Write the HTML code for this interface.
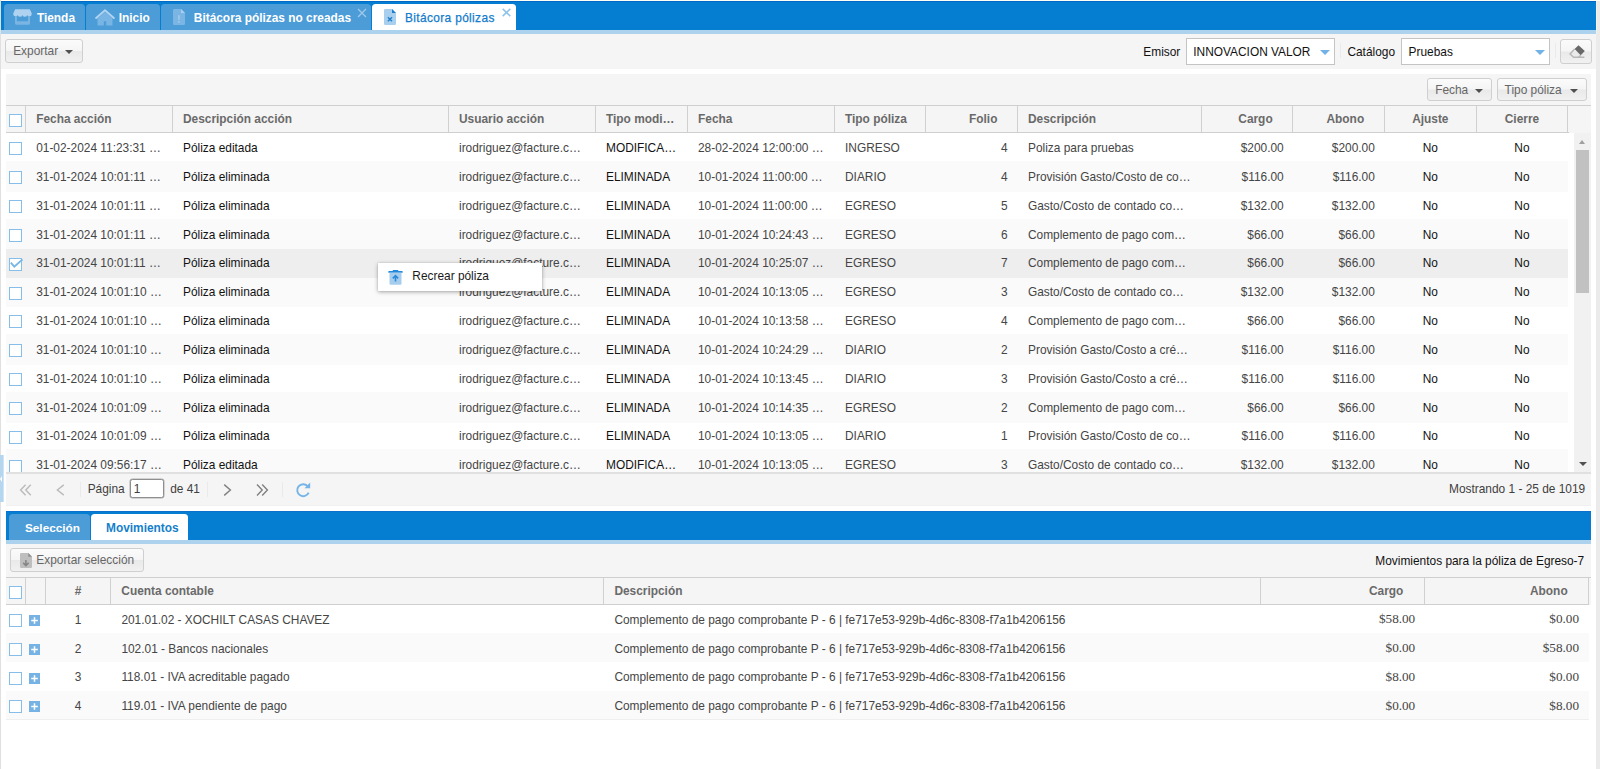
<!DOCTYPE html>
<html lang="es"><head><meta charset="utf-8"><title>Bitácora pólizas</title>
<style>
*{box-sizing:border-box;margin:0;padding:0}
html,body{width:1600px;height:769px;overflow:hidden;background:#fff}
body{font-family:"Liberation Sans",sans-serif;font-size:11.9px;color:#404040;position:relative}
.a{position:absolute}
.t{position:absolute;white-space:nowrap;line-height:14px}
#leftline{left:0;top:0;width:1px;height:769px;background:#e0e0e0}
#topline{left:0;top:0;width:1600px;height:1px;background:#fffef2}
#rstrip{left:1596px;top:1px;width:4px;height:768px;background:#ebebeb}
.bar{background:#057dd0}
.strip{background:#add2ed}
.tbg{background:#f5f5f5}
.tab{position:absolute;top:4px;height:26px;background:#4b9cd7;border-radius:3.5px 3.5px 0 0;color:#fff;font-weight:bold}
.tab.act{background:#fff;color:#157fcc;font-weight:normal}
.tab .t{top:7.2px}
.btn{position:absolute;border:1px solid #cfcfcf;border-radius:3px;background:linear-gradient(#fbfbfb 0%,#f5f5f5 48%,#e9e9e9 52%,#f1f1f1 100%);color:#666}
.arr{position:absolute;width:0;height:0;border-left:4px solid transparent;border-right:4px solid transparent;border-top:4.4px solid #505050}
.combo{position:absolute;top:38px;height:26.5px;background:#fff;border:1px solid #c4c4c4;color:#111}
.carr{position:absolute;width:0;height:0;border-left:5.1px solid transparent;border-right:5.1px solid transparent;border-top:5px solid #72b2e6}
.sep{position:absolute;width:1px;background:#eaeaea}
.hdr{position:absolute;background:#f5f5f5;border-top:1px solid #cfcfcf;color:#6a6a6a;font-weight:bold}
.hs{position:absolute;top:0;width:1px;background:#d0d0d0}
.cb{position:absolute;left:3px;top:9.4px;width:13px;height:13px;border:1px solid #86bde9;background:#fff}
.cb.chk svg{position:absolute;left:-1px;top:-1px;overflow:visible}
.gbody{position:absolute;left:6px;top:133px;width:1568px;height:339.5px;overflow:hidden;background:#fff}
.gbody2{position:absolute;left:6px;top:604.3px;width:1585px;height:120px;overflow:hidden}
.row{position:absolute;left:0;width:1561.6px}
.band{position:absolute;left:0;width:1561.6px}
.gbody2 .band{width:1583px}
.band.alt{background:#fafafa}
.band.sel{background:#eeeeee}
.gbody2 .row{width:1583px}
.c{position:absolute;top:8px;line-height:14px;white-space:nowrap}
.g{color:#454545}
.k{color:#121212}
.r{text-align:right}
.ctr{text-align:center}
.plus{position:absolute;left:22.9px;top:10.8px;width:11px;height:11px}
.plus svg{display:block}
.gbody2 .cb{top:9.8px}
.gbody2 .c{top:8.5px}
.gbody2 .c.sf{top:8.1px}
.hb{position:absolute;left:0;height:1px;background:#cfcfcf}
.sf{font-family:"Liberation Serif",serif;font-size:13.2px}

</style></head><body>
<div class="a" id="topline"></div>
<div class="a" id="leftline"></div>
<div class="a" id="rstrip"></div>
<div class="a" style="left:1596px;top:1px;width:1px;height:33px;background:#f6f2e6"></div>
<div class="a bar" style="left:1px;top:1px;width:1595px;height:29px"></div>
<div class="a" style="left:1px;top:1px;width:1595px;height:1px;background:#0069c9"></div>
<div class="a strip" style="left:1px;top:30px;width:1595px;height:4px"></div>
<div class="a tbg" style="left:1px;top:34px;width:1595px;height:35px"></div>

<div class="tab" style="left:4px;width:80.8px">
<svg class="a" style="left:9px;top:5px" width="19" height="16" viewBox="0 0 19 16"><path d="M2.2 0.3h14.6l1.9 3.9v1.1a2.3 2.3 0 0 1-4.5.6 2.4 2.4 0 0 1-4.7 0 2.4 2.4 0 0 1-4.7 0 2.3 2.3 0 0 1-4.5-.6V4.2z" fill="#aed2f0"/><path d="M2 7.6v6.6a1.6 1.6 0 0 0 1.6 1.6h11.8a1.6 1.6 0 0 0 1.6-1.6V7.6h-1.9v4.6H3.9V7.6z" fill="#7ab5e4"/></svg>
<span class="t" style="left:32.9px">Tienda</span></div>
<div class="tab" style="left:86px;width:73.6px">
<svg class="a" style="left:8.9px;top:4.7px" width="20" height="17" viewBox="0 0 20 17"><path d="M2.5 9.6L10 3L17.5 9.6V16.5H11.2V12.3H8.8V16.5H2.5Z" fill="#78b4e4"/><path d="M1.2 9L10 1.3L18.8 9" fill="none" stroke="#b0d3f0" stroke-width="2" stroke-linecap="round" stroke-linejoin="round"/></svg>
<span class="t" style="left:32.7px">Inicio</span></div>
<div class="tab" style="left:161px;width:209.7px">
<svg class="a" style="left:12px;top:5px" width="12" height="16" viewBox="0 0 12 16"><path d="M1.2 0H8L12 4V14.8A1.2 1.2 0 0 1 10.8 16H1.2A1.2 1.2 0 0 1 0 14.8V1.2A1.2 1.2 0 0 1 1.2 0Z" fill="#7ab5e4"/><path d="M8 0L12 4H8Z" fill="#a9d0f0"/><rect x="5.2" y="6.2" width="1.5" height="4.6" fill="#a3ccee"/><rect x="5.2" y="12" width="1.5" height="1.6" fill="#a3ccee"/></svg>
<span class="t" style="left:32.8px">Bitácora pólizas no creadas</span>
<svg class="a" style="left:196px;top:4px" width="10" height="10" viewBox="0 0 10 10"><path d="M1 1L9 9M9 1L1 9" stroke="#9fc9ec" stroke-width="1.3" fill="none"/></svg>
</div>
<div class="tab act" style="left:372px;width:143.5px">
<svg class="a" style="left:12px;top:5px" width="12" height="16" viewBox="0 0 12 16"><path d="M1.2 0H8L12 4V14.8A1.2 1.2 0 0 1 10.8 16H1.2A1.2 1.2 0 0 1 0 14.8V1.2A1.2 1.2 0 0 1 1.2 0Z" fill="#a9cfee"/><path d="M8 0L12 4H8Z" fill="#1c7fce"/><path d="M3.9 8.2L8 12.2M8 8.2L3.9 12.2" stroke="#1f7fcb" stroke-width="1.4" fill="none"/></svg>
<span class="t" style="left:33px;top:7.4px;font-size:11.9px;letter-spacing:0.36px;color:#137ccb;-webkit-text-stroke:0.25px #137ccb">Bitácora pólizas</span>
<svg class="a" style="left:129.6px;top:4.2px" width="9" height="9" viewBox="0 0 9 9"><path d="M0.7 0.9L8.3 8.1M8.3 0.9L0.7 8.1" stroke="#8ec3ea" stroke-width="1.5" fill="none"/></svg>
</div>

<div class="btn" style="left:5px;top:39px;width:77.5px;height:23.5px"><span class="t" style="left:7.2px;top:3.6px">Exportar</span><span class="arr" style="left:59.4px;top:10px"></span></div>

<span class="t k" style="left:1143.3px;top:44.6px;color:#111">Emisor</span>
<div class="combo" style="left:1186px;width:149px"><span class="t" style="left:6.3px;top:5.6px">INNOVACION VALOR</span><span class="carr" style="left:132.5px;top:11.4px"></span></div>
<div class="sep" style="left:1340px;top:43px;height:15px"></div>
<span class="t k" style="left:1347.4px;top:44.6px;color:#111">Catálogo</span>
<div class="combo" style="left:1401px;width:149px"><span class="t" style="left:6.6px;top:5.6px">Pruebas</span><span class="carr" style="left:132.7px;top:11.4px"></span></div>
<div class="sep" style="left:1555px;top:43px;height:15px"></div>
<div class="btn" style="left:1560.3px;top:39px;width:31.5px;height:24.7px">
<svg class="a" style="left:-0.8px;top:-0.2px" width="32" height="24" viewBox="0 0 32 24"><path d="M17.5 5.2L23.8 11.1L19.7 15.2L13.6 9Z" fill="#686868"/><path d="M13.6 9L9.1 14L12.6 17.3H23.4M19.7 15.2L17.4 17.3" fill="none" stroke="#b8b8b8" stroke-width="1.5"/></svg>
</div>

<!-- inner grid panel -->
<div class="a tbg" style="left:6px;top:74px;width:1585px;height:31px"></div>
<div class="btn" style="left:1427.4px;top:78.4px;width:65px;height:22.5px"><span class="t" style="left:6.8px;top:3.2px">Fecha</span><span class="arr" style="left:46.9px;top:9.8px"></span></div>
<div class="btn" style="left:1496.6px;top:78.4px;width:90.2px;height:22.5px"><span class="t" style="left:7px;top:3.2px">Tipo póliza</span><span class="arr" style="left:72.3px;top:9.8px"></span></div>

<div class="hdr" style="left:6px;top:105px;width:1585px;height:28px">
<span class="cb" style="left:3px;top:8.2px;height:13px"></span>
<div class="hs" style="left:19.2px;height:26px"></div>
<div class="hs" style="left:166px;height:26px"></div>
<div class="hs" style="left:442.2px;height:26px"></div>
<div class="hs" style="left:589.2px;height:26px"></div>
<div class="hs" style="left:681.2px;height:26px"></div>
<div class="hs" style="left:828.2px;height:26px"></div>
<div class="hs" style="left:919.2px;height:26px"></div>
<div class="hs" style="left:1011.2px;height:26px"></div>
<div class="hs" style="left:1195.4px;height:26px"></div>
<div class="hs" style="left:1286.4px;height:26px"></div>
<div class="hs" style="left:1378.2px;height:26px"></div>
<div class="hs" style="left:1470.2px;height:26px"></div>
<div class="hs" style="left:1561.2px;height:26px"></div>
<div class="hb" style="top:26px;width:1562.5px"></div>
<span class="t" style="left:30.2px;top:6px">Fecha acción</span>
<span class="t" style="left:177px;top:6px">Descripción acción</span>
<span class="t" style="left:453px;top:6px">Usuario acción</span>
<span class="t" style="left:600px;top:6px">Tipo modi…</span>
<span class="t" style="left:692px;top:6px">Fecha</span>
<span class="t" style="left:839px;top:6px">Tipo póliza</span>
<span class="t" style="left:963px;top:6px">Folio</span>
<span class="t" style="left:1022px;top:6px">Descripción</span>
<span class="t" style="left:1232.3px;top:6px">Cargo</span>
<span class="t" style="left:1320.5px;top:6px">Abono</span>
<span class="t ctr" style="left:1378.3px;width:92px;top:6px">Ajuste</span>
<span class="t ctr" style="left:1470.3px;width:91.3px;top:6px">Cierre</span>
</div>
<div class="gbody" id="g1">
<div class="band alt" style="top:28.04px;height:30.84px"></div><div class="band alt" style="top:85.72px;height:30.84px"></div><div class="band alt" style="top:143.40px;height:30.84px"></div><div class="band alt" style="top:201.08px;height:30.84px"></div><div class="band alt" style="top:258.76px;height:30.84px"></div><div class="band alt" style="top:316.44px;height:30.84px"></div><div class="band sel" style="top:116.06px;height:28.74px"></div>
<div class="row" style="top:0.00px;height:28.84px"><span class="cb"></span><span class="c g" style="left:30.2px">01-02-2024 11:23:31 …</span><span class="c k" style="left:177px">Póliza editada</span><span class="c g" style="left:453px">irodriguez@facture.c…</span><span class="c k" style="left:600px">MODIFICA…</span><span class="c g" style="left:692px">28-02-2024 12:00:00 …</span><span class="c g" style="left:839px">INGRESO</span><span class="c g r" style="right:560.0px">4</span><span class="c g" style="left:1022px">Poliza para pruebas</span><span class="c g r" style="right:283.9px">$200.00</span><span class="c g r" style="right:192.8px">$200.00</span><span class="c k ctr" style="left:1378.3px;width:92px">No</span><span class="c k ctr" style="left:1470.3px;width:91.3px">No</span></div>
<div class="row" style="top:28.84px;height:28.84px"><span class="cb"></span><span class="c g" style="left:30.2px">31-01-2024 10:01:11 …</span><span class="c k" style="left:177px">Póliza eliminada</span><span class="c g" style="left:453px">irodriguez@facture.c…</span><span class="c k" style="left:600px">ELIMINADA</span><span class="c g" style="left:692px">10-01-2024 11:00:00 …</span><span class="c g" style="left:839px">DIARIO</span><span class="c g r" style="right:560.0px">4</span><span class="c g" style="left:1022px">Provisión Gasto/Costo de co…</span><span class="c g r" style="right:283.9px">$116.00</span><span class="c g r" style="right:192.8px">$116.00</span><span class="c k ctr" style="left:1378.3px;width:92px">No</span><span class="c k ctr" style="left:1470.3px;width:91.3px">No</span></div>
<div class="row" style="top:57.68px;height:28.84px"><span class="cb"></span><span class="c g" style="left:30.2px">31-01-2024 10:01:11 …</span><span class="c k" style="left:177px">Póliza eliminada</span><span class="c g" style="left:453px">irodriguez@facture.c…</span><span class="c k" style="left:600px">ELIMINADA</span><span class="c g" style="left:692px">10-01-2024 11:00:00 …</span><span class="c g" style="left:839px">EGRESO</span><span class="c g r" style="right:560.0px">5</span><span class="c g" style="left:1022px">Gasto/Costo de contado co…</span><span class="c g r" style="right:283.9px">$132.00</span><span class="c g r" style="right:192.8px">$132.00</span><span class="c k ctr" style="left:1378.3px;width:92px">No</span><span class="c k ctr" style="left:1470.3px;width:91.3px">No</span></div>
<div class="row" style="top:86.52px;height:28.84px"><span class="cb"></span><span class="c g" style="left:30.2px">31-01-2024 10:01:11 …</span><span class="c k" style="left:177px">Póliza eliminada</span><span class="c g" style="left:453px">irodriguez@facture.c…</span><span class="c k" style="left:600px">ELIMINADA</span><span class="c g" style="left:692px">10-01-2024 10:24:43 …</span><span class="c g" style="left:839px">EGRESO</span><span class="c g r" style="right:560.0px">6</span><span class="c g" style="left:1022px">Complemento de pago com…</span><span class="c g r" style="right:283.9px">$66.00</span><span class="c g r" style="right:192.8px">$66.00</span><span class="c k ctr" style="left:1378.3px;width:92px">No</span><span class="c k ctr" style="left:1470.3px;width:91.3px">No</span></div>
<div class="row" style="top:115.36px;height:28.84px"><span class="cb chk"><svg viewBox="0 0 13 13" width="13" height="13"><path d="M1.8 4.7 L5.3 8.6 L13.5 1.4" fill="none" stroke="#78b7e6" stroke-width="1.9"/></svg></span><span class="c g" style="left:30.2px">31-01-2024 10:01:11 …</span><span class="c k" style="left:177px">Póliza eliminada</span><span class="c g" style="left:453px">irodriguez@facture.c…</span><span class="c k" style="left:600px">ELIMINADA</span><span class="c g" style="left:692px">10-01-2024 10:25:07 …</span><span class="c g" style="left:839px">EGRESO</span><span class="c g r" style="right:560.0px">7</span><span class="c g" style="left:1022px">Complemento de pago com…</span><span class="c g r" style="right:283.9px">$66.00</span><span class="c g r" style="right:192.8px">$66.00</span><span class="c k ctr" style="left:1378.3px;width:92px">No</span><span class="c k ctr" style="left:1470.3px;width:91.3px">No</span></div>
<div class="row" style="top:144.20px;height:28.84px"><span class="cb"></span><span class="c g" style="left:30.2px">31-01-2024 10:01:10 …</span><span class="c k" style="left:177px">Póliza eliminada</span><span class="c g" style="left:453px">irodriguez@facture.c…</span><span class="c k" style="left:600px">ELIMINADA</span><span class="c g" style="left:692px">10-01-2024 10:13:05 …</span><span class="c g" style="left:839px">EGRESO</span><span class="c g r" style="right:560.0px">3</span><span class="c g" style="left:1022px">Gasto/Costo de contado co…</span><span class="c g r" style="right:283.9px">$132.00</span><span class="c g r" style="right:192.8px">$132.00</span><span class="c k ctr" style="left:1378.3px;width:92px">No</span><span class="c k ctr" style="left:1470.3px;width:91.3px">No</span></div>
<div class="row" style="top:173.04px;height:28.84px"><span class="cb"></span><span class="c g" style="left:30.2px">31-01-2024 10:01:10 …</span><span class="c k" style="left:177px">Póliza eliminada</span><span class="c g" style="left:453px">irodriguez@facture.c…</span><span class="c k" style="left:600px">ELIMINADA</span><span class="c g" style="left:692px">10-01-2024 10:13:58 …</span><span class="c g" style="left:839px">EGRESO</span><span class="c g r" style="right:560.0px">4</span><span class="c g" style="left:1022px">Complemento de pago com…</span><span class="c g r" style="right:283.9px">$66.00</span><span class="c g r" style="right:192.8px">$66.00</span><span class="c k ctr" style="left:1378.3px;width:92px">No</span><span class="c k ctr" style="left:1470.3px;width:91.3px">No</span></div>
<div class="row" style="top:201.88px;height:28.84px"><span class="cb"></span><span class="c g" style="left:30.2px">31-01-2024 10:01:10 …</span><span class="c k" style="left:177px">Póliza eliminada</span><span class="c g" style="left:453px">irodriguez@facture.c…</span><span class="c k" style="left:600px">ELIMINADA</span><span class="c g" style="left:692px">10-01-2024 10:24:29 …</span><span class="c g" style="left:839px">DIARIO</span><span class="c g r" style="right:560.0px">2</span><span class="c g" style="left:1022px">Provisión Gasto/Costo a cré…</span><span class="c g r" style="right:283.9px">$116.00</span><span class="c g r" style="right:192.8px">$116.00</span><span class="c k ctr" style="left:1378.3px;width:92px">No</span><span class="c k ctr" style="left:1470.3px;width:91.3px">No</span></div>
<div class="row" style="top:230.72px;height:28.84px"><span class="cb"></span><span class="c g" style="left:30.2px">31-01-2024 10:01:10 …</span><span class="c k" style="left:177px">Póliza eliminada</span><span class="c g" style="left:453px">irodriguez@facture.c…</span><span class="c k" style="left:600px">ELIMINADA</span><span class="c g" style="left:692px">10-01-2024 10:13:45 …</span><span class="c g" style="left:839px">DIARIO</span><span class="c g r" style="right:560.0px">3</span><span class="c g" style="left:1022px">Provisión Gasto/Costo a cré…</span><span class="c g r" style="right:283.9px">$116.00</span><span class="c g r" style="right:192.8px">$116.00</span><span class="c k ctr" style="left:1378.3px;width:92px">No</span><span class="c k ctr" style="left:1470.3px;width:91.3px">No</span></div>
<div class="row" style="top:259.56px;height:28.84px"><span class="cb"></span><span class="c g" style="left:30.2px">31-01-2024 10:01:09 …</span><span class="c k" style="left:177px">Póliza eliminada</span><span class="c g" style="left:453px">irodriguez@facture.c…</span><span class="c k" style="left:600px">ELIMINADA</span><span class="c g" style="left:692px">10-01-2024 10:14:35 …</span><span class="c g" style="left:839px">EGRESO</span><span class="c g r" style="right:560.0px">2</span><span class="c g" style="left:1022px">Complemento de pago com…</span><span class="c g r" style="right:283.9px">$66.00</span><span class="c g r" style="right:192.8px">$66.00</span><span class="c k ctr" style="left:1378.3px;width:92px">No</span><span class="c k ctr" style="left:1470.3px;width:91.3px">No</span></div>
<div class="row" style="top:288.40px;height:28.84px"><span class="cb"></span><span class="c g" style="left:30.2px">31-01-2024 10:01:09 …</span><span class="c k" style="left:177px">Póliza eliminada</span><span class="c g" style="left:453px">irodriguez@facture.c…</span><span class="c k" style="left:600px">ELIMINADA</span><span class="c g" style="left:692px">10-01-2024 10:13:05 …</span><span class="c g" style="left:839px">DIARIO</span><span class="c g r" style="right:560.0px">1</span><span class="c g" style="left:1022px">Provisión Gasto/Costo de co…</span><span class="c g r" style="right:283.9px">$116.00</span><span class="c g r" style="right:192.8px">$116.00</span><span class="c k ctr" style="left:1378.3px;width:92px">No</span><span class="c k ctr" style="left:1470.3px;width:91.3px">No</span></div>
<div class="row" style="top:317.24px;height:28.84px"><span class="cb"></span><span class="c g" style="left:30.2px">31-01-2024 09:56:17 …</span><span class="c k" style="left:177px">Póliza editada</span><span class="c g" style="left:453px">irodriguez@facture.c…</span><span class="c k" style="left:600px">MODIFICA…</span><span class="c g" style="left:692px">10-01-2024 10:13:05 …</span><span class="c g" style="left:839px">EGRESO</span><span class="c g r" style="right:560.0px">3</span><span class="c g" style="left:1022px">Gasto/Costo de contado co…</span><span class="c g r" style="right:283.9px">$132.00</span><span class="c g r" style="right:192.8px">$132.00</span><span class="c k ctr" style="left:1378.3px;width:92px">No</span><span class="c k ctr" style="left:1470.3px;width:91.3px">No</span></div>
</div>
<!-- scrollbar -->
<div class="a" style="left:1574px;top:133px;width:17px;height:339.5px;background:#f1f1f1">
<span class="a" style="left:5px;top:7px;width:0;height:0;border-left:3.5px solid transparent;border-right:3.5px solid transparent;border-bottom:4px solid #a0a0a0"></span>
<div class="a" style="left:2px;top:17.1px;width:13px;height:142.9px;background:#c1c1c1"></div>
<span class="a" style="left:4.5px;top:328.5px;width:0;height:0;border-left:4px solid transparent;border-right:4px solid transparent;border-top:4.5px solid #505050"></span>
</div>
<!-- paging toolbar -->
<div class="a" style="left:6px;top:472px;width:1585px;height:33.6px;background:#f5f5f5;border-top:2px solid #e0e0e0;border-bottom:1px solid #f0f0f0"></div>
<svg class="a" style="left:19px;top:483px" width="14" height="14" viewBox="0 0 14 14"><path d="M6.6 1.8L1.6 7L6.6 12.2M11.8 1.8L6.8 7L11.8 12.2" fill="none" stroke="#bcbcbc" stroke-width="1.5"/></svg>
<svg class="a" style="left:54px;top:483px" width="14" height="14" viewBox="0 0 14 14"><path d="M9.8 1.8L3.4 7L9.8 12.2" fill="none" stroke="#bcbcbc" stroke-width="1.5"/></svg>
<div class="sep" style="left:80px;top:481.5px;height:15.5px"></div>
<span class="t" style="left:87.7px;top:481.6px;color:#404040">Página</span>
<div class="a" style="left:130.2px;top:479.2px;width:33.6px;height:19px;background:#fff;border:1px solid #8f8f8f;border-radius:2.5px;box-shadow:0 0 0 0.5px #b0b0b0"><span class="t" style="left:2.6px;top:2.2px;color:#404040">1</span></div>
<span class="t" style="left:170.2px;top:481.6px;color:#404040">de 41</span>
<div class="sep" style="left:207px;top:481.5px;height:15.5px"></div>
<svg class="a" style="left:220px;top:483px" width="14" height="14" viewBox="0 0 14 14"><path d="M4.2 1.6L10.4 7L4.2 12.4" fill="none" stroke="#808080" stroke-width="1.4"/></svg>
<svg class="a" style="left:255px;top:483px" width="14" height="14" viewBox="0 0 14 14"><path d="M2 1.6L7.2 7L2 12.4M7.2 1.6L12.4 7L7.2 12.4" fill="none" stroke="#808080" stroke-width="1.4"/></svg>
<div class="sep" style="left:282px;top:481.5px;height:15.5px"></div>
<svg class="a" style="left:295px;top:482px" width="17" height="16" viewBox="0 0 17 16"><path d="M12.6 4.1A6 6 0 1 0 13.7 10.6" fill="none" stroke="#76b4e7" stroke-width="1.9"/><path d="M15.2 0.6V6.3H9.5Z" fill="#76b4e7"/></svg>
<span class="t" style="right:14.8px;top:481.6px;color:#404040">Mostrando 1 - 25 de 1019</span>

<!-- left splitter handle -->
<div class="a" style="left:0;top:455px;width:4px;height:47px;background:#b5d6ef;border-right:1px solid #cfe4f5"></div>
<span class="a" style="left:0.3px;top:475.5px;width:0;height:0;border-top:3.5px solid transparent;border-bottom:3.5px solid transparent;border-right:2.6px solid #fff"></span>

<!-- context menu -->
<div class="a" style="left:377.5px;top:263px;width:164px;height:27.5px;background:#fff;box-shadow:0 0.5px 4px rgba(0,0,0,.34),0 0 1px rgba(0,0,0,.16)">
<svg class="a" style="left:10.7px;top:7px" width="15" height="16" viewBox="0 0 15 16"><rect x="0.3" y="1.1" width="14.4" height="1.7" rx="0.6" fill="#2489da"/><rect x="4.7" y="0.1" width="5.6" height="1.4" rx="0.5" fill="#2489da"/><path d="M1.5 2.8H13.5V13.4A1.3 1.3 0 0 1 12.2 14.7H2.8A1.3 1.3 0 0 1 1.5 13.4Z" fill="#a6cdee"/><path d="M7.5 11.4V6M4.8 8.3L7.5 5.7L10.2 8.3" fill="none" stroke="#2b8bd8" stroke-width="1.6"/></svg>
<span class="t k" style="left:34.8px;top:6.4px;color:#1a1a1a">Recrear póliza</span>
</div>

<!-- bottom tab panel -->
<div class="a bar" style="left:6px;top:511px;width:1585px;height:29px"></div>
<div class="a" style="left:6px;top:511px;width:1585px;height:1px;background:#0a72cd"></div>
<div class="a strip" style="left:6px;top:540px;width:1585px;height:4px"></div>
<div class="tab" style="left:9px;top:514.3px;width:80.5px;height:25.7px"><span class="t" style="left:16px;top:6.4px;font-size:11.75px">Selección</span></div>
<div class="tab act" style="left:90.8px;top:514.3px;width:97.2px;height:25.7px;font-weight:bold"><span class="t" style="left:15.2px;top:6.4px">Movimientos</span></div>
<div class="a tbg" style="left:6px;top:544px;width:1585px;height:33px"></div>
<div class="btn" style="left:10px;top:548.2px;width:133.8px;height:24.3px">
<svg class="a" style="left:9px;top:4px" width="12" height="15" viewBox="0 0 12 15"><path d="M1.2 0H8.3L12 3.7V13.8A1.2 1.2 0 0 1 10.8 15H1.2A1.2 1.2 0 0 1 0 13.8V1.2A1.2 1.2 0 0 1 1.2 0Z" fill="#bebebe"/><path d="M8.3 0L12 3.7H8.3Z" fill="#8c8c8c"/><path d="M5.9 7V12.2M3.2 9.9L5.9 12.6L8.6 9.9" fill="none" stroke="#868686" stroke-width="1.6"/></svg>
<span class="t" style="left:25.3px;top:3.9px">Exportar selección</span></div>
<span class="t" style="right:15.8px;top:553.8px;color:#111">Movimientos para la póliza de Egreso-7</span>
<div class="hdr" style="left:6px;top:577px;width:1585px;height:27.8px">
<span class="cb" style="left:3px;top:7.8px;height:13px"></span>
<div class="hs" style="left:19px;height:26px"></div>
<div class="hs" style="left:39.2px;height:26px"></div>
<div class="hs" style="left:104.2px;height:26px"></div>
<div class="hs" style="left:597.2px;height:26px"></div>
<div class="hs" style="left:1254px;height:26px"></div>
<div class="hs" style="left:1418.3px;height:26px"></div>
<div class="hs" style="left:1582.4px;height:26px"></div>
<div class="hb" style="top:26px;width:1583.4px"></div>
<span class="t ctr" style="left:39.2px;width:65.5px;top:5.6px">#</span>
<span class="t" style="left:115.3px;top:5.6px">Cuenta contable</span>
<span class="t" style="left:608.4px;top:5.6px">Descripción</span>
<span class="t" style="left:1363px;top:5.6px">Cargo</span>
<span class="t" style="left:1524px;top:5.6px">Abono</span>
</div>
<div class="gbody2" id="g2">
<div class="band alt" style="top:28.75px;height:28.75px"></div><div class="band alt" style="top:86.25px;height:28.75px"></div><div class="band" style="top:114.60px;height:1px;background:#efefef"></div>
<div class="row" style="top:0.00px;height:28.75px"><span class="cb"></span><span class="plus"><svg viewBox="0 0 11 11" width="11" height="11"><rect width="11" height="11" fill="#76b3e4"/><path d="M5.5 2.2V8.8M2.2 5.5H8.8" stroke="#fff" stroke-width="1.5"/></svg></span><span class="c g ctr" style="left:39.25px;width:65.5px">1</span><span class="c g" style="left:115.4px">201.01.02 - XOCHILT CASAS CHAVEZ</span><span class="c g" style="left:608.4px">Complemento de pago comprobante P - 6 | fe717e53-929b-4d6c-8308-f7a1b4206156</span><span class="c g r sf" style="right:173.8px">$58.00</span><span class="c g r sf" style="right:10.0px">$0.00</span></div>
<div class="row" style="top:28.75px;height:28.75px"><span class="cb"></span><span class="plus"><svg viewBox="0 0 11 11" width="11" height="11"><rect width="11" height="11" fill="#76b3e4"/><path d="M5.5 2.2V8.8M2.2 5.5H8.8" stroke="#fff" stroke-width="1.5"/></svg></span><span class="c g ctr" style="left:39.25px;width:65.5px">2</span><span class="c g" style="left:115.4px">102.01 - Bancos nacionales</span><span class="c g" style="left:608.4px">Complemento de pago comprobante P - 6 | fe717e53-929b-4d6c-8308-f7a1b4206156</span><span class="c g r sf" style="right:173.8px">$0.00</span><span class="c g r sf" style="right:10.0px">$58.00</span></div>
<div class="row" style="top:57.50px;height:28.75px"><span class="cb"></span><span class="plus"><svg viewBox="0 0 11 11" width="11" height="11"><rect width="11" height="11" fill="#76b3e4"/><path d="M5.5 2.2V8.8M2.2 5.5H8.8" stroke="#fff" stroke-width="1.5"/></svg></span><span class="c g ctr" style="left:39.25px;width:65.5px">3</span><span class="c g" style="left:115.4px">118.01 - IVA acreditable pagado</span><span class="c g" style="left:608.4px">Complemento de pago comprobante P - 6 | fe717e53-929b-4d6c-8308-f7a1b4206156</span><span class="c g r sf" style="right:173.8px">$8.00</span><span class="c g r sf" style="right:10.0px">$0.00</span></div>
<div class="row" style="top:86.25px;height:28.75px"><span class="cb"></span><span class="plus"><svg viewBox="0 0 11 11" width="11" height="11"><rect width="11" height="11" fill="#76b3e4"/><path d="M5.5 2.2V8.8M2.2 5.5H8.8" stroke="#fff" stroke-width="1.5"/></svg></span><span class="c g ctr" style="left:39.25px;width:65.5px">4</span><span class="c g" style="left:115.4px">119.01 - IVA pendiente de pago</span><span class="c g" style="left:608.4px">Complemento de pago comprobante P - 6 | fe717e53-929b-4d6c-8308-f7a1b4206156</span><span class="c g r sf" style="right:173.8px">$0.00</span><span class="c g r sf" style="right:10.0px">$8.00</span></div>
</div>
</body></html>
